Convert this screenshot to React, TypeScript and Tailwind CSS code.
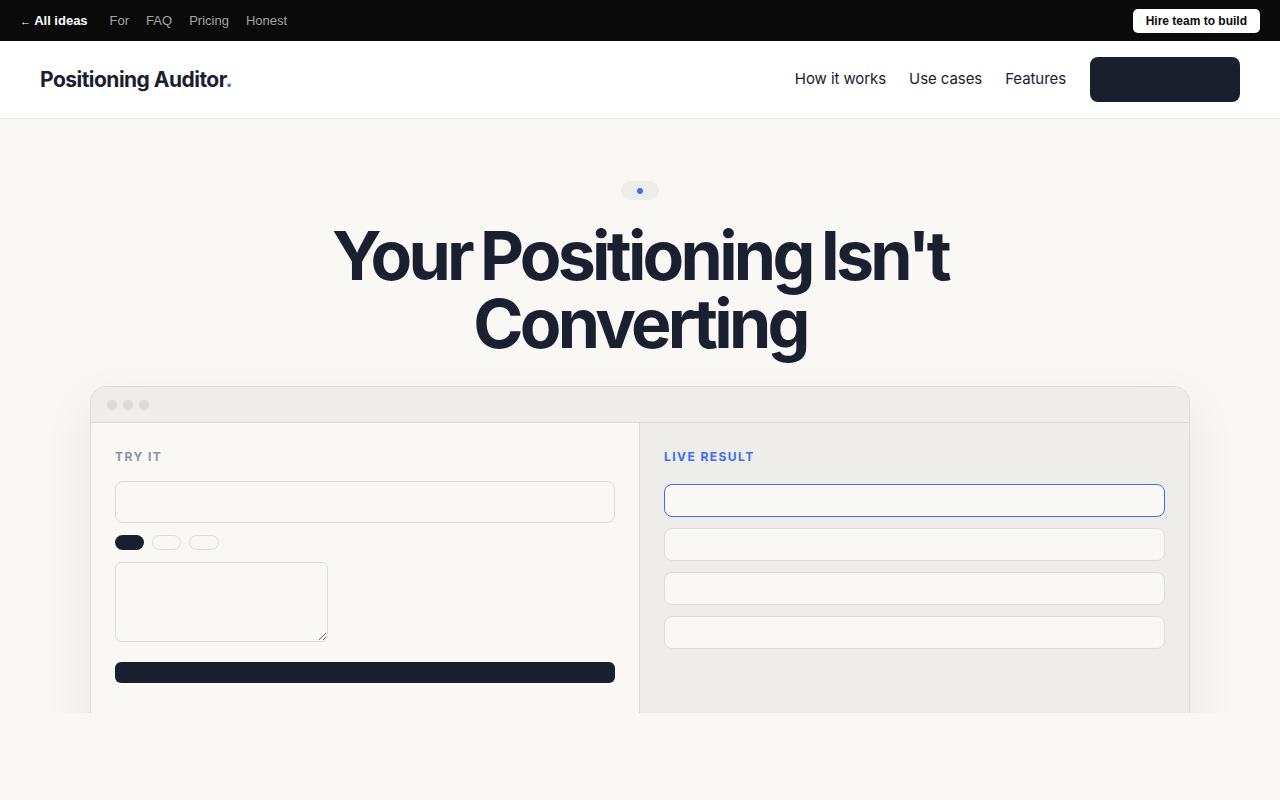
import React from 'react';

const topLinks = ['For', 'FAQ', 'Pricing', 'Honest'];
const navLinks = ['How it works', 'Use cases', 'Features'];

const sans = "font-['Inter','Liberation_Sans',sans-serif]";

function TopBar() {
  return (
    <div className="flex h-[41px] items-center justify-between bg-[#0a0a0a] px-[20px] font-['Liberation_Sans',Arial,sans-serif] text-[13px]">
      <div className="flex items-center gap-[22px]">
        <a className="font-bold text-white">
          <span className="text-[11px] font-normal">←</span> All ideas
        </a>
        <div className="flex items-center gap-[17px] text-[#a3a3a3]">
          {topLinks.map((l) => (
            <a key={l}>{l}</a>
          ))}
        </div>
      </div>
      <button className="h-[24px] rounded-[5px] bg-white px-[13px] text-[12px] font-bold text-[#0a0a0a]">
        Hire team to build
      </button>
    </div>
  );
}

function Nav() {
  return (
    <header className={`flex h-[78px] items-center justify-between border-b border-[#e8e6e1] bg-white px-[40px] ${sans}`}>
      <div className="text-[21px] font-bold tracking-[-0.025em] text-[#1b2030]">
        Positioning Auditor<span className="text-[#3b6ef5]">.</span>
      </div>
      <nav className="flex items-center">
        <div className="flex items-center gap-[23px] text-[15px] tracking-[-0.005em] text-[#1b2030]">
          {navLinks.map((l) => (
            <a key={l}>{l}</a>
          ))}
        </div>
        <button className="ml-[24px] h-[45px] w-[150px] rounded-[8px] bg-[#1a1f2e]" />
      </nav>
    </header>
  );
}

function Demo() {
  return (
    <div className="mx-auto mt-[29px] w-[1100px] overflow-hidden rounded-t-[16px] border border-[#dedbd5] bg-[#f9f8f5] shadow-[0_20px_50px_rgba(0,0,0,0.08)]">
      {/* window chrome */}
      <div className="flex h-[36px] items-center gap-[6px] border-b border-[#dedbd5] bg-[#efede9] px-[16px]">
        <span className="h-[10px] w-[10px] rounded-full bg-[#dddbd7]" />
        <span className="h-[10px] w-[10px] rounded-full bg-[#dddbd7]" />
        <span className="h-[10px] w-[10px] rounded-full bg-[#dddbd7]" />
      </div>
      <div className="grid h-[400px] grid-cols-2">
        <div className="border-r border-[#dedbd5] px-[24px] pt-[25px]">
          <div className="text-[12px] font-bold tracking-[0.12em] text-[#8a94a6]">TRY IT</div>
          <div className="mt-[15px] h-[42px] rounded-[8px] border border-[#e0ddd8] bg-[#f9f8f5]" />
          <div className="mt-[12px] flex gap-[8px]">
            <span className="h-[15px] w-[29px] rounded-full bg-[#1a1f2e]" />
            <span className="h-[15px] w-[29px] rounded-full border border-[#e0ddd8]" />
            <span className="h-[15px] w-[30px] rounded-full border border-[#e0ddd8]" />
          </div>
          <textarea className="mt-[12px] block h-[80px] w-[213px] rounded-[6px] border border-[#e0ddd8] bg-[#f9f8f5]" />
          <div className="mt-[20px] h-[21px] rounded-[6px] bg-[#1a1f2e]" />
        </div>
        <div className="bg-[#efede9] px-[24px] pt-[25px]">
          <div className="text-[12px] font-bold tracking-[0.12em] text-[#3b6ef5]">LIVE RESULT</div>
          <div className="mt-[18px] flex flex-col gap-[11px]">
            <div className="h-[33px] rounded-[8px] border border-[#3b6ef5] bg-[#f9f8f5]" />
            <div className="h-[33px] rounded-[8px] border border-[#e0ddd8] bg-[#f9f8f5]" />
            <div className="h-[33px] rounded-[8px] border border-[#e0ddd8] bg-[#f9f8f5]" />
            <div className="h-[33px] rounded-[8px] border border-[#e0ddd8] bg-[#f9f8f5]" />
          </div>
        </div>
      </div>
    </div>
  );
}

export default function App() {
  return (
    <div className="min-h-screen bg-[#f9f8f5]">
      <TopBar />
      <Nav />
      <section className={`h-[594px] overflow-hidden pt-[62px] ${sans}`}>
        <div className="flex justify-center">
          <span className="flex h-[19px] w-[38px] items-center justify-center rounded-full bg-[#efede9]">
            <span className="h-[6px] w-[6px] rounded-full bg-[#3b6ef5]" />
          </span>
        </div>
        <h1 className="mx-auto mt-[21px] max-w-[700px] text-center text-[68px] font-bold leading-[68px] tracking-[-0.055em] text-[#1b2030] [word-spacing:-0.05em]">
          Your Positioning Isn't Converting
        </h1>
        <Demo />
      </section>
    </div>
  );
}
